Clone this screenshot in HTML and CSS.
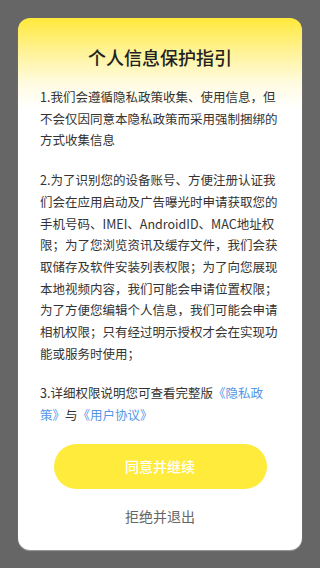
FILE: index.html
```html
<!DOCTYPE html>
<html lang="zh-CN">
<head>
    <meta charset="UTF-8">
    <meta name="viewport" content="width=device-width, initial-scale=1.0">
    <title>个人信息保护指引</title>
    <link rel="stylesheet" href="styles.css">
</head>
<body>
    <div class="dialog">
        <h1>个人信息保护指引</h1>

        <div class="content">
            <p>1.我们会遵循隐私政策收集、使用信息，但<br>不会仅因同意本隐私政策而采用强制捆绑的<br>方式收集信息</p>
            <p>2.为了识别您的设备账号、方便注册认证我<br>们会在应用启动及广告曝光时申请获取您的<br>手机号码、IMEI、AndroidID、MAC地址权<br>限；为了您浏览资讯及缓存文件，我们会获<br>取储存及软件安装列表权限；为了向您展现<br>本地视频内容，我们可能会申请位置权限；<br>为了方便您编辑个人信息，我们可能会申请<br>相机权限；只有经过明示授权才会在实现功<br>能或服务时使用；</p>
            <p>3.详细权限说明您可查看完整版<a href="#">《隐私政<br>策》</a>与<a href="#">《用户协议》</a></p>
        </div>

        <button class="agree">同意并继续</button>
        <div class="refuse">拒绝并退出</div>
    </div>
</body>
</html>
```

FILE: styles.css
```css
html, body {
    margin: 0;
    height: 100%;
}
body {
    font-family: "Noto Sans CJK SC", "Noto Sans", sans-serif;
    background-color: #666666;
    padding: 18px 18px 0;
    box-sizing: border-box;
}
.dialog {
    background: linear-gradient(to bottom, #ffe93a 0px, #fff39a 35px, #fffbe0 65px, #ffffff 90px);
    border-radius: 12px;
    padding: 26px 22px 24px;
    box-shadow: 0 1px 1px rgba(255,255,255,0.35);
}
h1 {
    margin: 0;
    font-size: 18px;
    line-height: 26px;
    font-weight: 500;
    color: #222;
    text-align: center;
}
.content {
    margin-top: 16px;
    font-size: 12.5px;
    line-height: 21.7px;
    color: #333;
    white-space: nowrap;
}
.content p {
    margin: 0 0 18px;
}
.content a {
    color: #5496e6;
    text-decoration: none;
}
.agree {
    display: block;
    width: 213px;
    height: 45px;
    margin: 0 auto;
    border: none;
    border-radius: 23px;
    background-color: #ffeb3b;
    color: #fff;
    font-family: inherit;
    font-size: 14px;
    font-weight: 500;
}
.refuse {
    margin-top: 17px;
    text-align: center;
    font-size: 14px;
    line-height: 20px;
    color: #666;
}
```
